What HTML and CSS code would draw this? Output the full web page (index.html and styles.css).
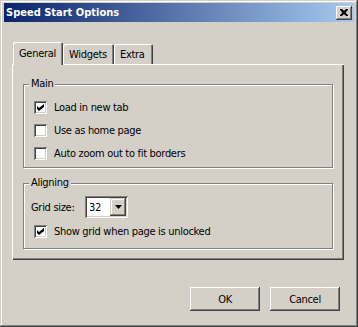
FILE: index.html
```html
<!DOCTYPE html>
<html lang="en">
<head>
    <meta charset="UTF-8">
    <title>Speed Start Options</title>
    <link rel="stylesheet" href="styles.css">
</head>
<body>

<div class="window">
    <div class="titlebar">
        <span class="title">Speed Start Options</span>
        <span class="close-btn">
            <svg width="8" height="7" viewBox="0 0 8 7"><path d="M0 0h2l2 2 2-2h2v1l-2.5 2.5 2.5 2.5v1h-2l-2-2-2 2h-2v-1l2.5-2.5-2.5-2.5z" fill="#000"/></svg>
        </span>
    </div>

    <div class="content">
        <div class="tabs">
            <div class="tab tab-active">General</div>
            <div class="tab tab-widgets">Widgets</div>
            <div class="tab tab-extra">Extra</div>
        </div>

        <div class="panel">
            <div class="group group-main">
                <span class="legend">Main</span>
                <div class="check-row">
                    <span class="checkbox">
                        <svg width="7" height="7" viewBox="0 0 7 7"><path d="M0 2l2 2 5-4v3l-5 4-2-2z" fill="#000"/></svg>
                    </span>
                    <span>Load in new tab</span>
                </div>
                <div class="check-row">
                    <span class="checkbox"></span>
                    <span>Use as home page</span>
                </div>
                <div class="check-row">
                    <span class="checkbox"></span>
                    <span>Auto zoom out to fit borders</span>
                </div>
            </div>

            <div class="group group-align">
                <span class="legend">Aligning</span>
                <div class="grid-row">
                    <span class="grid-label">Grid size:</span>
                    <span class="select">
                        <span class="select-value">32</span>
                        <span class="select-btn">
                            <svg width="7" height="4" viewBox="0 0 7 4"><path d="M0 0h7l-3.5 4z" fill="#000"/></svg>
                        </span>
                    </span>
                </div>
                <div class="check-row">
                    <span class="checkbox">
                        <svg width="7" height="7" viewBox="0 0 7 7"><path d="M0 2l2 2 5-4v3l-5 4-2-2z" fill="#000"/></svg>
                    </span>
                    <span>Show grid when page is unlocked</span>
                </div>
            </div>
        </div>

        <div class="buttons">
            <button class="btn btn-default">OK</button>
            <button class="btn">Cancel</button>
        </div>
    </div>
</div>

</body>
</html>
```

FILE: styles.css
```css
body {
    margin: 0;
    font-family: "DejaVu Sans Condensed", "Liberation Sans", sans-serif;
    font-size: 11px;
    letter-spacing: -0.3px;
    color: #000;
    background-color: #d4d0c8;
}
.window {
    width: 358px;
    height: 327px;
    box-sizing: border-box;
    padding: 3px 4px 3px 4px;
    background-color: #d4d0c8;
    box-shadow: inset -1px -1px #404040, inset 1px 1px #d4d0c8,
                inset -2px -2px #808080, inset 2px 2px #fff;
}
.titlebar {
    height: 19px;
    display: flex;
    align-items: center;
    justify-content: space-between;
    background: linear-gradient(to right, #0a246a, #a6caf0);
    padding: 0 2px 0 2px;
}
.title {
    color: #fff;
    font-weight: bold;
    font-size: 11px;
    letter-spacing: 0;
}
.close-btn {
    width: 16px;
    height: 14px;
    box-sizing: border-box;
    display: flex;
    align-items: center;
    justify-content: center;
    background-color: #d4d0c8;
    box-shadow: inset -1px -1px #404040, inset 1px 1px #fff,
                inset -2px -2px #808080;
}
.content {
    padding: 20px 10px 0 8px;
}
.tabs {
    display: flex;
    align-items: flex-end;
    height: 22px;
    padding-left: 1px;
    position: relative;
    z-index: 1;
}
.tab {
    height: 20px;
    box-sizing: border-box;
    padding: 4px 6px 0 6px;
    background-color: #d4d0c8;
    box-shadow: inset 1px 1px #fff, inset -1px 0 #404040, inset -2px 0 #808080;
    border-radius: 2px 2px 0 0;
}
.tab-active {
    height: 23px;
    margin-bottom: -1px;
    padding: 5px 6px 0 6px;
    width: 50px;
}
.tab-widgets {
    width: 51px;
}
.tab-extra {
    width: 39px;
}
.panel {
    height: 196px;
    box-sizing: border-box;
    padding: 20px 11px 0 11px;
    box-shadow: inset 1px 1px #fff, inset -1px -1px #404040, inset -2px -2px #808080;
}
.group {
    position: relative;
    border: 1px solid #808080;
    box-shadow: inset 1px 1px #fff, 1px 1px #fff;
    padding: 16px 10px 7px 10px;
}
.group-align {
    margin-top: 15px;
    padding: 12px 10px 10px 7px;
}
.legend {
    position: absolute;
    top: -8px;
    left: 5px;
    padding: 0 2px;
    line-height: 14px;
    background-color: #d4d0c8;
}
.check-row {
    display: flex;
    align-items: center;
    gap: 7px;
    height: 13px;
    line-height: 13px;
}
.check-row + .check-row {
    margin-top: 10px;
}
.group-align .check-row {
    margin-top: 7px;
    margin-left: 3px;
}
.checkbox {
    width: 13px;
    height: 13px;
    box-sizing: border-box;
    display: flex;
    align-items: center;
    justify-content: center;
    background-color: #fff;
    box-shadow: inset 1px 1px #808080, inset -1px -1px #fff,
                inset 2px 2px #404040, inset -2px -2px #d4d0c8;
}
.grid-row {
    display: flex;
    align-items: center;
    height: 22px;
}
.grid-label {
    width: 54px;
}
.select {
    width: 43px;
    height: 22px;
    box-sizing: border-box;
    display: flex;
    align-items: center;
    justify-content: space-between;
    padding: 2px;
    background-color: #fff;
    box-shadow: inset 1px 1px #808080, inset -1px -1px #fff,
                inset 2px 2px #404040, inset -2px -2px #d4d0c8;
}
.select-value {
    padding-left: 2px;
}
.select-btn {
    width: 16px;
    height: 18px;
    box-sizing: border-box;
    display: flex;
    align-items: center;
    justify-content: center;
    background-color: #d4d0c8;
    box-shadow: inset -1px -1px #404040, inset 1px 1px #d4d0c8,
                inset -2px -2px #808080, inset 2px 2px #fff;
}
.buttons {
    display: flex;
    justify-content: flex-end;
    gap: 10px;
    margin-top: 27px;
    padding-right: 4px;
}
.btn {
    width: 70px;
    height: 24px;
    border: none;
    font-family: "DejaVu Sans Condensed", "Liberation Sans", sans-serif;
    font-size: 11px;
    letter-spacing: -0.3px;
    color: #000;
    background-color: #d4d0c8;
    box-shadow: inset -1px -1px #404040, inset 1px 1px #fff,
                inset -2px -2px #808080, inset 2px 2px #d4d0c8;
    padding: 0;
}
```
